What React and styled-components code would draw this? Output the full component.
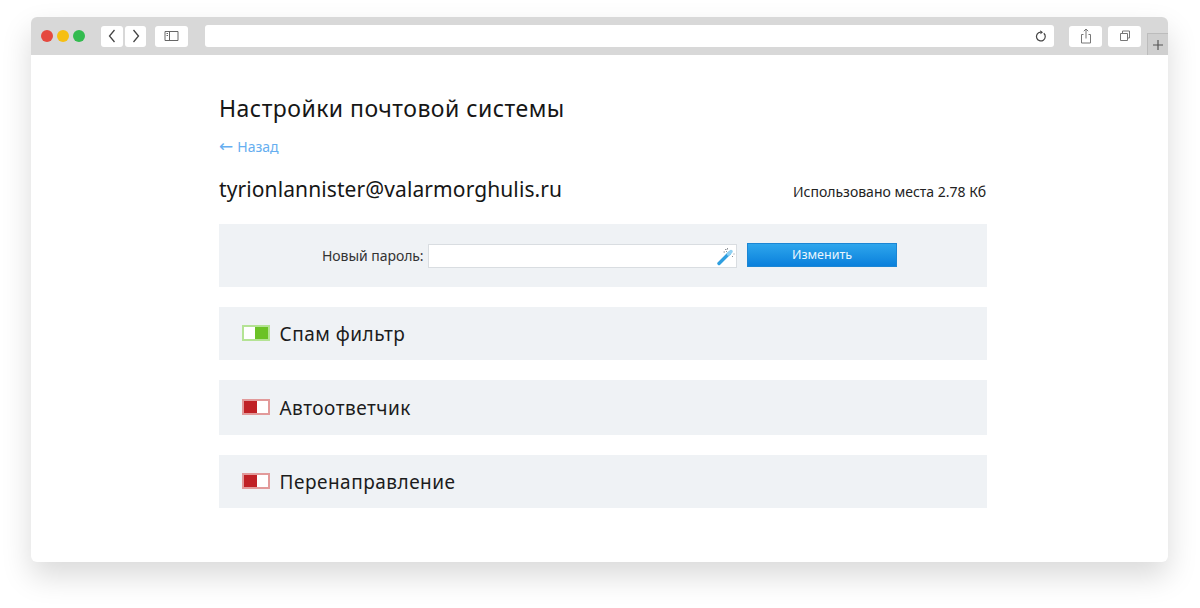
import React from "react";
import styled, { createGlobalStyle } from "styled-components";

const Global = createGlobalStyle`
  html, body { margin: 0; padding: 0; background: #fff; }
  body { font-family: "Noto Sans", "Open Sans", sans-serif; color: #1a1a1a; overflow: hidden; }
`;

const Page = styled.div`
  width: 1200px;
  height: 608px;
  padding: 17px 32px 46px 31px;
  box-sizing: border-box;
`;

const BrowserWindow = styled.div`
  height: 545px;
  background: #fff;
  border-radius: 6px;
  box-shadow: 0 14px 30px rgba(0, 0, 0, 0.15);
  overflow: hidden;
  display: flex;
  flex-direction: column;
`;

const Toolbar = styled.div`
  position: relative;
  flex: 0 0 38px;
  height: 38px;
  box-sizing: border-box;
  background: #d8d8d8;
  display: flex;
  align-items: center;
  padding: 0 27px 0 10px;
`;

const Lights = styled.div`
  display: flex;
  gap: 4px;
  margin-right: 16px;
`;

const Light = styled.span`
  width: 12px;
  height: 12px;
  border-radius: 50%;
  background: ${(p) => p.$color};
`;

const ToolButton = styled.div`
  width: ${(p) => p.$width}px;
  height: 21px;
  margin-left: ${(p) => p.$gap || 0}px;
  background: #fff;
  border-radius: 3px;
  display: flex;
  align-items: center;
  justify-content: center;
`;

const AddressBar = styled.div`
  flex: 1;
  height: 22px;
  margin: 0 15px 0 17px;
  background: #fff;
  border-radius: 3px;
  display: flex;
  align-items: center;
  justify-content: flex-end;
  padding-right: 7px;
`;

const NewTab = styled.div`
  position: absolute;
  right: 0;
  bottom: 0;
  width: 20px;
  height: 21px;
  background: #cfcfcf;
  border-left: 1px solid #bcbcbc;
  border-top: 1px solid #bcbcbc;
  display: flex;
  align-items: center;
  justify-content: center;
`;

const Content = styled.main`
  width: 768px;
  margin-left: 188px;
  padding-top: 37px;
`;

const Title = styled.h1`
  margin: 0;
  font-size: 23px;
  line-height: 32px;
  font-weight: 400;
  letter-spacing: 0.47px;
  color: #161616;
`;

const BackLink = styled.a`
  display: block;
  margin-top: 12px;
  height: 20px;
  font-size: 14px;
  line-height: 20px;
  color: #66aef0;
`;

const BackArrow = styled.span`
  font-family: "DejaVu Sans", sans-serif;
  font-size: 17px;
  line-height: 20px;
  margin-right: 4px;
`;

const AccountRow = styled.div`
  display: flex;
  justify-content: space-between;
  align-items: center;
  margin-top: 16px;
  height: 34px;
  padding-right: 1px;
`;

const Email = styled.div`
  font-size: 21px;
  line-height: 30px;
  letter-spacing: 0.1px;
  color: #161616;
`;

const Usage = styled.div`
  font-size: 14px;
  line-height: 20px;
  margin-top: 6px;
  color: #222;
`;

const PasswordPanel = styled.form`
  margin-top: 18px;
  height: 63px;
  background: #eff2f5;
  display: flex;
  align-items: center;
  padding-left: 103px;
`;

const FieldLabel = styled.label`
  font-size: 14px;
  letter-spacing: -0.05px;
  color: #333;
  margin-right: 4px;
  width: 102px;
  white-space: nowrap;
`;

const InputBox = styled.div`
  width: 309px;
  height: 24px;
  box-sizing: border-box;
  background: #fff;
  border: 1px solid #d9dde1;
  display: flex;
  align-items: center;
  justify-content: flex-end;
`;

const ChangeButton = styled.div`
  width: 150px;
  height: 24px;
  margin: -1px 0 0 10px;
  box-sizing: border-box;
  background: linear-gradient(#2ea6ec, #0a80dc);
  border: 1px solid #1b86d4;
  color: #eaf5fd;
  font-size: 12.5px;
  line-height: 22px;
  text-align: center;
`;

const OptionList = styled.div`
  display: flex;
  flex-direction: column;
  gap: 20px;
  margin-top: 20px;
`;

const OptionRow = styled.div`
  height: ${(p) => p.$height}px;
  background: #eff2f5;
  display: flex;
  align-items: center;
  padding-left: 23px;
`;

const Toggle = styled.span`
  width: 28px;
  height: 16px;
  box-sizing: border-box;
  background: #fff;
  border: 2px solid ${(p) => (p.$on ? "#b4e394" : "#e29a9a")};
  display: flex;
  justify-content: ${(p) => (p.$on ? "flex-end" : "flex-start")};
  margin-top: -2px;
`;

const ToggleKnob = styled.span`
  width: 13px;
  height: 100%;
  background: ${(p) => (p.$on ? "#6cc226" : "#c02126")};
`;

const OptionLabel = styled.span`
  margin-left: 9.5px;
  font-size: 19px;
  letter-spacing: 0.5px;
  color: #1c1c1c;
`;

const Glyph = ({ w = 16, h = 16, children, stroke = "#444", sw = 1.2 }) => (
  <svg width={w} height={h} viewBox={`0 0 ${w} ${h}`} fill="none" stroke={stroke} strokeWidth={sw}>
    {children}
  </svg>
);

const options = [
  { label: "Спам фильтр", on: true, height: 53 },
  { label: "Автоответчик", on: false, height: 55 },
  { label: "Перенаправление", on: false, height: 53 },
];

export default function App() {
  return (
    <Page>
      <Global />
      <BrowserWindow>
        <Toolbar>
          <Lights>
            <Light $color="#e5493f" />
            <Light $color="#f6bf12" />
            <Light $color="#33bb4f" />
          </Lights>
          <ToolButton $width={22}>
            <Glyph w={12} h={16} sw={1.3}><path d="M8.5 2 3.5 8l5 6" /></Glyph>
          </ToolButton>
          <ToolButton $width={21} $gap={2}>
            <Glyph w={12} h={16} sw={1.3}><path d="M3.5 2l5 6-5 6" /></Glyph>
          </ToolButton>
          <ToolButton $width={33} $gap={9}>
            <Glyph w={15} h={12} sw={1} stroke="#666">
              <path d="M1 1.5h13v9H1zM5.5 1.5v9" />
              <path d="M2.5 3.5h1.5M2.5 5.5h1.5" />
            </Glyph>
          </ToolButton>
          <AddressBar>
            <Glyph w={13} h={13} sw={1.2}>
              <path d="M9.8 3.2a4.4 4.4 0 1 1-3.3-1.1" />
              <path d="M6.2.3 9 2.2 6.5 4.2" fill="#444" stroke="none" />
            </Glyph>
          </AddressBar>
          <ToolButton $width={33}>
            <Glyph w={12} h={16} sw={1} stroke="#777">
              <path d="M3.5 6.5H1.5v8.5h9V6.5H8.5M6 10.5V1.2M3.8 3.2 6 1l2.2 2.2" />
            </Glyph>
          </ToolButton>
          <ToolButton $width={33} $gap={6}>
            <Glyph w={12} h={12} sw={1} stroke="#777">
              <path d="M3.5 3V1h7v7H8.5M1.5 3.5h7v7h-7z" />
            </Glyph>
          </ToolButton>
          <NewTab>
            <Glyph w={12} h={12} sw={1.2} stroke="#555"><path d="M6 1v10M1 6h10" /></Glyph>
          </NewTab>
        </Toolbar>
        <Content>
          <Title>Настройки почтовой системы</Title>
          <BackLink><BackArrow>←</BackArrow>Назад</BackLink>
          <AccountRow>
            <Email>tyrionlannister@valarmorghulis.ru</Email>
            <Usage>Использовано места 2.78 Кб</Usage>
          </AccountRow>
          <PasswordPanel>
            <FieldLabel>Новый пароль:</FieldLabel>
            <InputBox>
              <svg width="20" height="20" viewBox="0 0 20 20" fill="none">
                <path d="M3 17.5 13.5 7" stroke="#2e9fe0" strokeWidth="3.4" strokeLinecap="round" />
                <path d="M12.5 8 15 5.5" stroke="#8fd0f2" strokeWidth="3.4" strokeLinecap="round" />
                <path d="M9 3.5h1.5M11.5 2v1.5M7.5 6h1.5M10 5.5h1M16.5 10v1M17.5 8h1" stroke="#8a8f94" strokeWidth="1" />
              </svg>
            </InputBox>
            <ChangeButton>Изменить</ChangeButton>
          </PasswordPanel>
          <OptionList>
            {options.map((o) => (
              <OptionRow key={o.label} $height={o.height}>
                <Toggle $on={o.on}><ToggleKnob $on={o.on} /></Toggle>
                <OptionLabel>{o.label}</OptionLabel>
              </OptionRow>
            ))}
          </OptionList>
        </Content>
      </BrowserWindow>
    </Page>
  );
}
